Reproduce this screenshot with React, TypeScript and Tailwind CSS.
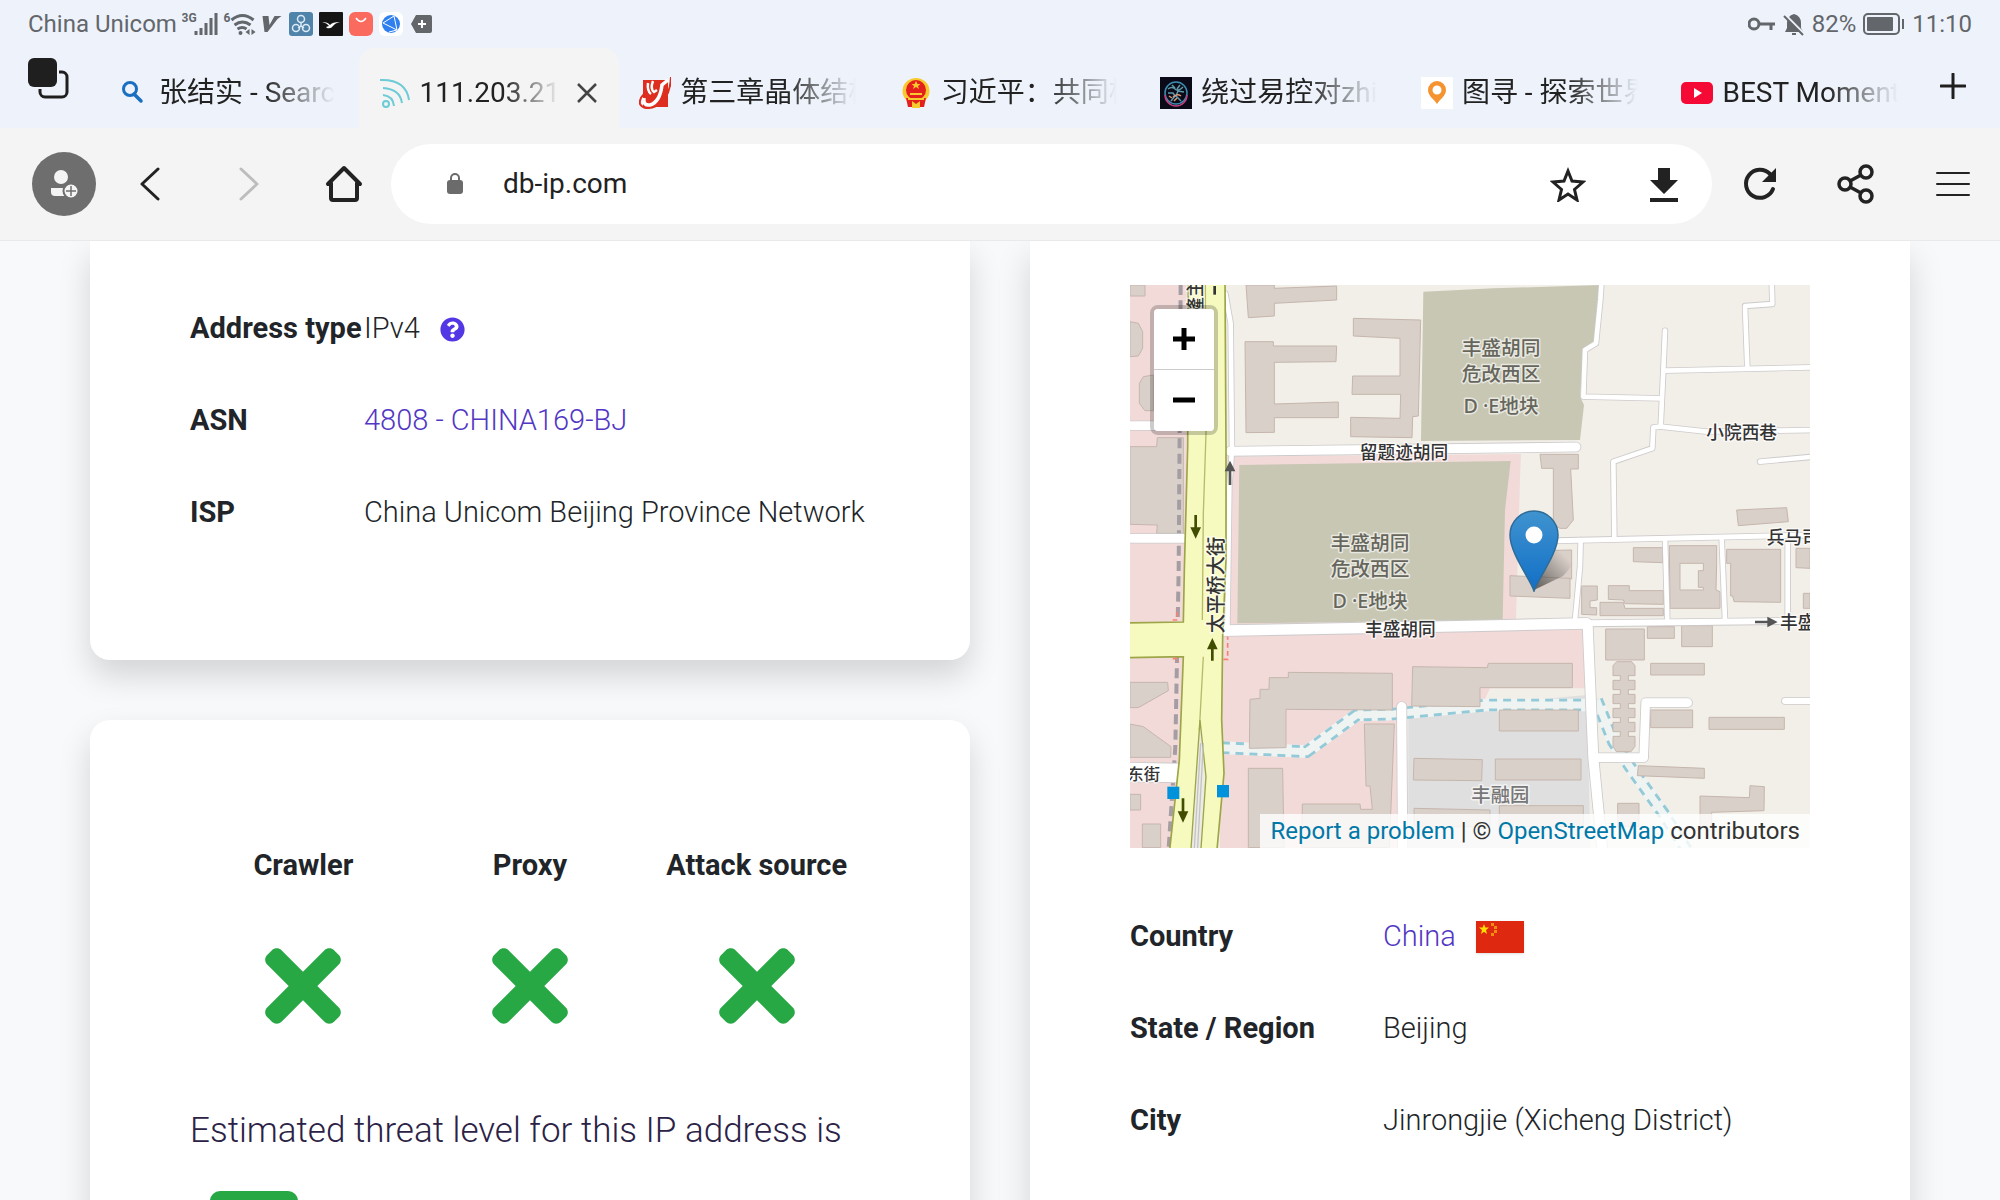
import React from 'react';
import { FaQuestionCircle, FaTimes } from 'react-icons/fa';

type Pts = string;

const buildings: Pts[] = [
  '30,15 75,15 75,48 30,48',
  '30,125 55,130 68,155 68,205 55,228 30,230',
  '100,285 70,290 58,310 58,370 75,392 100,392',
  '30,500 110,500 112,473 190,473 190,760 110,760 112,735 30,733',
  '378,15 463,15 463,25 650,18 650,60 463,70 463,108 385,113',
  '375,185 460,185 460,198 650,198 648,245 463,247 463,372 655,366 655,413 463,413 463,457 378,458',
  '700,115 902,120 895,408 878,410 876,473 692,470 692,412 840,415 842,343 696,343 698,288 840,288 840,175 700,168',
  '1260,523 1375,523 1375,567 1352,567 1360,720 1340,745 1320,745 1300,735 1300,565 1265,565',
  '1850,690 2000,683 2005,725 1855,737',
  '1540,803 1628,803 1628,848 1540,845',
  '1820,808 1982,808 1982,967 1842,965 1838,948 1832,948 1832,850 1820,850',
  '2028,805 2070,805 2070,865 2028,863',
  '2050,940 2070,940 2070,985 2050,985',
  '1250,812 1355,810 1355,897 1250,890',
  '1170,887 1350,895 1350,955 1170,948',
  '1385,918 1432,918 1432,960 1410,963 1410,983 1430,983 1430,1005 1385,1003',
  '1465,917 1528,917 1528,932 1630,932 1630,973 1515,971 1510,960 1465,958',
  '1440,967 1510,967 1515,985 1630,985 1630,1007 1440,1007',
  '1457,1047 1573,1047 1573,1140 1457,1140',
  '1582,1040 1663,1040 1663,1075 1582,1075',
  '1685,1037 1777,1037 1777,1100 1685,1100',
  '1592,1150 1753,1150 1753,1185 1592,1185',
  '1592,1290 1718,1290 1718,1343 1592,1343',
  '1767,1312 1993,1312 1993,1348 1767,1348',
  '1555,1457 1753,1465 1753,1495 1552,1487',
  '1740,1548 1888,1553 1890,1517 1933,1520 1932,1592 1775,1597 1775,1640 1740,1640',
  '1493,1570 1557,1570 1557,1640 1493,1640',
  '1138,1290 1375,1290 1375,1353 1138,1353',
  '1126,1437 1383,1437 1383,1500 1126,1500',
  '1138,1577 1390,1577 1390,1640 1138,1640',
  '882,1435 1087,1439 1085,1502 880,1500',
  '882,1585 1110,1590 1110,1640 882,1640',
  '878,1160 1102,1163 1105,1150 1357,1150 1357,1223 1080,1223 1080,1280 875,1278',
  '505,1177 817,1180 817,1290 498,1288 498,1403 388,1405 390,1258 420,1255 420,1228 447,1228 448,1193 505,1193',
  '385,1465 488,1465 492,1703 385,1703',
  '733,1332 823,1332 808,1703 545,1703 547,1572 720,1572 722,1588 757,1588 750,1518 738,1518',
  '30,1207 143,1207 145,1232 55,1283 30,1283',
  '30,1332 70,1340 153,1400 152,1432 30,1432',
  '30,1543 62,1543 62,1590 30,1590',
  '67,1632 122,1632 122,1703 67,1703',
];

const lanes: { pts: Pts; width: number }[] = [
  { pts: '1445,0 1441,60 1428,190 1395,210 1390,350 1620,355', width: 14 },
  { pts: '1635,152 1630,270 1622,440 1600,442 1597,505 1480,545 1483,770', width: 14 },
  { pts: '1635,272 2080,262', width: 14 },
  { pts: '1955,0 1957,72 1875,78 1882,262', width: 14 },
  { pts: '1622,440 1760,455 2080,450', width: 14 },
  { pts: '1920,545 2080,530', width: 14 },
  { pts: '1310,782 2080,765', width: 15 },
  { pts: '1382,780 1380,860 1365,1020', width: 14 },
  { pts: '1635,775 1642,1020', width: 14 },
  { pts: '1805,775 1815,1020', width: 14 },
  { pts: '2003,790 2003,1015', width: 14 },
  { pts: '316,40 332,130 336,512 328,620 322,1050', width: 14 },
  { pts: '1400,1030 2080,1022', width: 18 },
  { pts: '1995,1263 2080,1263', width: 18 },
  { pts: '330,514 1368,501', width: 27 },
  { pts: '310,1052 1050,1038 1400,1030', width: 32 },
  { pts: '1403,1035 1420,1433 1448,1720', width: 30 },
  { pts: '1430,1433 1571,1433 1577,1268 1703,1268', width: 26 },
  { pts: '845,1280 848,1720', width: 28 },
  { pts: '10,437 200,437', width: 26 },
  { pts: '10,775 196,775', width: 26 },
  { pts: '10,1476 180,1479', width: 56 },
];

const canals: Pts[] = [
  '305,1403 560,1415 710,1305 820,1302 870,1297 1100,1275 1400,1275',
  '1430,1260 1480,1385 1530,1460 1630,1600 1700,1710',
];

const MapLabel = ({ x, y, size = 53, color = '#333', anchor = 'middle', children }: {
  x: number; y: number; size?: number; color?: string; anchor?: 'middle' | 'start'; children: React.ReactNode;
}) => (
  <text x={x} y={y} fontSize={size} fontWeight="500" fill={color} textAnchor={anchor} stroke="#fff" strokeOpacity="0.6" strokeWidth="9" strokeLinejoin="round" paintOrder="stroke">
    {children}
  </text>
);

const StreetMap = () => (
  <svg viewBox="30 15 2040 1689" preserveAspectRatio="xMidYMid slice" className="block h-full w-full font-['Noto_Sans','Noto_Sans_CJK_SC',sans-serif]" role="img" aria-label="Map of Jinrongjie, Beijing">
    <rect x="30" y="15" width="2040" height="1689" fill="#f2efe9" />
    <g fill="#f2dad9">
      <rect x="30" y="15" width="170" height="1689" />
      <path d="M345 530 1203 522 1200 600 1188 1020 320 1040V530Z" />
      <path d="M300 1060 1400 1035V1225H1110L1080 1290H850V1704H300Z" />
    </g>
    <path d="M865 1295 1400 1245 1412 1704H865Z" fill="#dfdfdf" />
    <g fill="#c7c7b4">
      <path d="M910 35 1120 25 1440 15 1424 190 1392 205 1380 350 1392 375 1380 480 903 483Z" />
      <path d="M358 555 1172 543 1155 690 1148 1020 352 1030Z" />
    </g>
    {canals.map((pts) => (
      <g key={pts} fill="none">
        <polyline points={pts} stroke="#eff4f3" strokeWidth="38" />
        <polyline points={pts} stroke="#94cad8" strokeWidth="38" strokeDasharray="24 18" />
        <polyline points={pts} stroke="#eff4f3" strokeWidth="21" />
      </g>
    ))}
    <g fill="#d9d0c9" stroke="#c5b6ad" strokeWidth="3">
      {buildings.map((pts) => <polygon key={pts} points={pts} />)}
      <path fillRule="evenodd" d="M1648 797H1790V850L1788 930 1800 935V985H1650ZM1680 850V930H1750V922H1735V872H1750V850Z" />
      <path d="M1490 1145h45l10 12v30h-20v14h20v28h-20v14h20v28h-20v14h20v28h-20v14h20v28h-20v14h20v30l-12 16h-44l-10-16v-30h22v-14h-22v-28h22v-14h-22v-28h22v-14h-22v-28h22v-14h-22v-28h22v-14h-22v-30Z" />
    </g>
    <path d="M182 15 176 870 166 1400 146 1704" fill="none" stroke="#a49da3" strokeWidth="12" strokeDasharray="30 16" />
    <g fill="none" strokeLinecap="round" strokeLinejoin="round">
      {lanes.map((l) => <polyline key={l.pts} points={l.pts} stroke="#cdcacb" strokeWidth={l.width + 5} />)}
      {lanes.map((l) => <polyline key={l.pts} points={l.pts} stroke="#fff" strokeWidth={l.width} />)}
    </g>
    <path d="M205 0 203 500 193 870 190 1026 20 1029V1133L190 1130 178 1440 148 1720H290L312 1480 305 1320 308 1070 318 840 318 500 315 0Z" fill="#f7fabf" stroke="#9da548" strokeWidth="5" />
    <path d="M20 1032H300V1128H20Z" fill="#f7fabf" />
    <path d="M256 0 258 460 250 700 247 1020M250 1130 238 1350" fill="none" stroke="#b5bb6a" strokeWidth="4" />
    <path d="M240 1320 212 1720H242L258 1490Z" fill="#ecebe4" stroke="#9da548" strokeWidth="4" />
    <path d="M242 1390 222 1720M250 1390 232 1720" fill="none" stroke="#c4c4c6" strokeWidth="4" />
    <path d="M310 1138H323V1070M158 1020H172V985M158 1136H174V1146" fill="none" stroke="#fa8072" strokeWidth="5" strokeDasharray="14 10" />
    <g fill="#0092da">
      <rect x="142" y="1520" width="36" height="37" />
      <rect x="291" y="1515" width="36" height="37" />
    </g>
    <g fill="#555">
      <path d="M330 542 346 574H334V615H326V574H314Z" />
      <path d="M1973 1026 1942 1010V1022H1905V1030H1942V1042Z" />
    </g>
    <g fill="#414d00">
      <path d="M227 776 243 742H231V705H223V742H211Z" />
      <path d="M277 1074 293 1108H281V1142H273V1108H261Z" />
      <path d="M189 1628 205 1594H193V1555H185V1594H173Z" />
    </g>
    <MapLabel x={1143} y={226} size={59} color="#66665c">丰盛胡同</MapLabel>
    <MapLabel x={1143} y={304} size={59} color="#66665c">危改西区</MapLabel>
    <MapLabel x={1143} y={400} size={59} color="#66665c">D ·E地块</MapLabel>
    <MapLabel x={750} y={810} size={59} color="#66665c">丰盛胡同</MapLabel>
    <MapLabel x={750} y={888} size={59} color="#66665c">危改西区</MapLabel>
    <MapLabel x={750} y={984} size={59} color="#66665c">D ·E地块</MapLabel>
    <MapLabel x={1141} y={1566} size={58} color="#777">丰融园</MapLabel>
    <MapLabel x={852} y={538}>留题迹胡同</MapLabel>
    <MapLabel x={841} y={1068}>丰盛胡同</MapLabel>
    <MapLabel x={1865} y={478}>小院西巷</MapLabel>
    <MapLabel x={1940} y={793} anchor="start">兵马司</MapLabel>
    <MapLabel x={1980} y={1047} anchor="start">丰盛</MapLabel>
    <MapLabel x={22} y={1500} size={49} anchor="start">东街</MapLabel>
    <g transform="rotate(-90 308 1060)">
      <MapLabel x={308} y={1060} size={58} anchor="start">太平桥大街</MapLabel>
    </g>
    <g transform="rotate(-90 246 104)">
      <MapLabel x={246} y={104} anchor="start">隆主</MapLabel>
    </g>
    <path d="M280 18h8v26h-8z" fill="#333" />
  </svg>
);

const Marker = () => (
  <svg viewBox="0 0 82 82" className="h-full w-full" aria-hidden="true">
    <defs>
      <linearGradient id="pin" x1="0" y1="0" x2="0" y2="1">
        <stop offset="0" stopColor="#3f93cf" />
        <stop offset="1" stopColor="#126fc6" />
      </linearGradient>
      <linearGradient id="shade" x1="0" y1="1" x2="1" y2="0">
        <stop offset="0.1" stopColor="#000" stopOpacity="0.5" />
        <stop offset="0.8" stopColor="#000" stopOpacity="0" />
      </linearGradient>
    </defs>
    <path d="M25 80 38 44Q50 34 64 42 68 52 54 66Z" fill="url(#shade)" />
    <path d="M25 81C22 70 1 44 1 25a24 24 0 0 1 48 0C49 44 28 70 25 81Z" fill="url(#pin)" stroke="#2e6c97" strokeWidth="1.5" />
    <circle cx="25" cy="25" r="8.5" fill="#fff" />
  </svg>
);

const tabs: { title: string; icon: React.ReactNode; active?: boolean }[] = [
  {
    title: '张结实 - Search',
    icon: <g fill="none" stroke="#1a6fc0"><circle cx="12" cy="12" r="6.500" strokeWidth="3" /><path d="m16 17 7 7" strokeWidth="3.500" strokeLinecap="round" /></g>,
  },
  {
    title: '111.203.21',
    active: true,
    icon: <g fill="none" stroke="#6ccbd6" strokeWidth="2"><circle cx="7" cy="27" r="3" /><path d="M4 18q10 1 11 11M4 11q17 1 19 15M1 3q26-1 29 20" /></g>,
  },
  {
    title: '第三章晶体结构',
    icon: <g><path d="M4 3H29V30H4Z" fill="#dd2e1f" /><path d="M32 0Q31 22 17 29 5 34 1 27 0 22 5 17" fill="none" stroke="#dd2e1f" strokeWidth="2" /><path d="M29 3 23 8Q21 25 11 28 4 29 5 21" fill="none" stroke="#fff" strokeWidth="3.500" /><path d="M9 6Q8 14 12 17M14 4Q11 12 15 15L18 13" fill="none" stroke="#fff" strokeWidth="2.500" /></g>,
  },
  {
    title: '习近平：共同构',
    icon: <g><ellipse cx="16" cy="14" rx="13.500" ry="13" fill="#f9c930" /><ellipse cx="16" cy="13" rx="10" ry="10" fill="#e3201b" /><path d="M6 21H26L24 30H8Z" fill="#e3201b" /><path d="m16 4 1.500 3h3l-2.500 2 1 3-3-2-3 2 1-3-2.500-2h3ZM10 16h12v2H10ZM8 21h16v2H8ZM12 24l4 3 4-3v7h-8Z" fill="#f9c930" /></g>,
  },
  {
    title: '绕过易控对zhihui',
    icon: <g fill="none"><path d="M0 0H32V32H0Z" fill="#0b0a18" /><circle cx="16" cy="16" r="11" stroke="#3a8fb0" strokeWidth="1.500" /><path d="M5 18a11 11 0 0 0 22 0" stroke="#c2407f" strokeWidth="1.500" /><path d="M8 12q4-3 7 0t8-2M8 16h5l2 3-4 5M24 15l-6-1-2 5 5 5M12 8l3 3M20 8l-3 4" stroke="#5e9aa8" strokeWidth="1.500" /><path d="M13 20q4-4 8-1M14 24l3-3M9 19l3 2" stroke="#d99a7c" strokeWidth="1.500" /></g>,
  },
  {
    title: '图寻 - 探索世界',
    icon: <g><path d="M0 0H32V32H0Z" fill="#fff" /><path fillRule="evenodd" d="M16 4a9 9 0 0 1 9 9c0 6-6 9-9 14-3-5-9-8-9-14a9 9 0 0 1 9-9Zm0 4.500a4.500 4.500 0 1 0 0 9 4.500 4.500 0 0 0 0-9Z" fill="#f59331" /></g>,
  },
  {
    title: 'BEST Moments',
    icon: <g><rect y="5" width="32" height="22" rx="5" fill="#f50935" /><path d="m13 11 8 5-8 5Z" fill="#fff" /></g>,
  },
];

const StatusBar = () => (
  <div className="flex h-12 items-center justify-between px-7 text-2xl text-[#63666b]">
    <div className="flex items-center">
      <span className="w-[154px] whitespace-nowrap">China Unicom</span>
      <svg viewBox="182 8 106 32" className="h-8 w-[107px]" fill="#63666b" aria-hidden="true">
        <text x="181" y="22" fontSize="12" fontWeight="700">3G</text>
        <path d="M194 31h3v4h-3zM199 28h3v7h-3zM204 23h3v12h-3zM209 18h3v17h-3zM214 13h3v22h-3z" />
        <text x="223" y="22" fontSize="12" fontWeight="700">6</text>
        <path d="M231 20q11-9 22 0M234 25q8-6 16 0M237 29q5-3 9 0" fill="none" stroke="#63666b" strokeWidth="3" />
        <circle cx="240" cy="33" r="2" />
        <path d="m249 29-4 3 4 3zM251 29l4 3-4 3z" />
        <path d="M262 16h6l1 9 5-9h7l-4 3-10 13h-3z" />
      </svg>
      <div className="flex items-center gap-[6px]">
        <svg viewBox="0 0 24 24" className="size-6" fill="none" aria-hidden="true">
          <rect width="24" height="24" rx="3" fill="#4f83aa" />
          <g stroke="#dcebf5" strokeWidth="1.500"><circle cx="12" cy="7" r="3.500" /><circle cx="7" cy="16" r="3.500" /><circle cx="17" cy="16" r="3.500" /><path d="M12 10v4l-3 2M12 14l3 2" /></g>
        </svg>
        <svg viewBox="0 0 24 24" className="size-6" aria-hidden="true">
          <rect width="24" height="24" rx="1" fill="#151515" />
          <path d="M3 10q6 0 8 3 2-3 10-3-5 1-7 4-2 3-6 2l-1-1 3-1q-2-3-7-4Z" fill="#fff" />
        </svg>
        <svg viewBox="0 0 24 24" className="size-6" aria-hidden="true">
          <rect width="24" height="24" rx="6" fill="#fb6a5e" />
          <path d="M7 6q5 7 10 0" fill="none" stroke="#fff" strokeWidth="1.500" />
        </svg>
        <svg viewBox="0 0 24 24" className="size-6" aria-hidden="true">
          <rect width="24" height="24" rx="6" fill="#fff" />
          <circle cx="12" cy="12" r="9" fill="#2f7ff0" />
          <path d="m4 11 11-7 3 14L4 11m14 7-8 2" fill="none" stroke="#fff" strokeWidth="1" />
        </svg>
        <svg viewBox="0 0 24 24" className="size-6" aria-hidden="true">
          <path d="M7 3h14a2 2 0 0 1 2 2v14a2 2 0 0 1-2 2H7l-5-9Z" fill="#63666b" />
          <path d="M13 8v8M9 12h8" stroke="#fff" strokeWidth="2" />
        </svg>
      </div>
    </div>
    <div className="flex items-center gap-[6px]">
      <svg viewBox="0 0 28 24" className="h-6 w-7" fill="none" stroke="#63666b" strokeWidth="3" aria-hidden="true">
        <circle cx="6" cy="12" r="5" /><path d="M11 12h16M23 12v6" />
      </svg>
      <svg viewBox="0 0 24 24" className="size-6" aria-hidden="true">
        <path d="M12 2q7 2 7 9v5l2 4H3l2-4v-5q0-7 7-9Z" fill="#63666b" />
        <path d="m3 3 20 20" stroke="#eef3fb" strokeWidth="3" />
        <path d="m2 4 19 19M10 22h4" stroke="#63666b" strokeWidth="2" />
      </svg>
      <span>82%</span>
      <svg viewBox="0 0 44 24" className="h-6 w-11" aria-hidden="true">
        <rect x="2" y="2" width="35" height="20" rx="4" fill="none" stroke="#63666b" strokeWidth="2" />
        <rect x="5" y="5" width="26" height="14" rx="1" fill="#63666b" />
        <path d="M41 7v10" stroke="#63666b" strokeWidth="2" />
      </svg>
      <span>11:10</span>
    </div>
  </div>
);

const TabStrip = () => (
  <nav className="flex h-20 text-[28px] text-[#222]" aria-label="Tabs">
    <button className="flex w-[98px] shrink-0 justify-start pt-2 pl-6" aria-label="All tabs">
      <svg viewBox="0 0 48 48" className="size-12" fill="none" aria-hidden="true">
        <path d="M35 16h3a5 5 0 0 1 5 5v15a5 5 0 0 1-5 5H21a5 5 0 0 1-5-5v-3" stroke="#1f1f1f" strokeWidth="3" />
        <rect x="4" y="2" width="29" height="29" rx="6" fill="#1f1f1f" />
      </svg>
    </button>
    {tabs.map((tab) => (
      <div key={tab.title} className={tab.active ? 'flex h-20 min-w-0 flex-1 items-center gap-[9px] rounded-t-2xl bg-[#f4f4f4] pt-[10px] pl-5' : 'flex h-20 min-w-0 flex-1 items-center gap-[9px] pt-[10px] pl-5'}>
        <button className="flex min-w-0 items-center gap-[9px]">
          <svg viewBox="0 0 32 32" className="size-8 shrink-0" aria-hidden="true">{tab.icon}</svg>
          <span className={tab.active ? 'w-[140px] overflow-hidden whitespace-nowrap text-left mask-r-from-60%' : 'w-[176px] overflow-hidden whitespace-nowrap text-left mask-r-from-60%'}>
            {tab.title}
          </span>
        </button>
        {tab.active && (
          <button className="p-2" aria-label="Close tab">
            <svg viewBox="0 0 20 20" className="size-5" aria-hidden="true"><path d="m1 1 18 18M19 1 1 19" stroke="#444" strokeWidth="2.500" /></svg>
          </button>
        )}
      </div>
    ))}
    <button className="w-[78px] shrink-0 pb-1 pl-[18px]" aria-label="New tab">
      <svg viewBox="0 0 26 26" className="size-[26px]" aria-hidden="true"><path d="M13 1v24M1 13h24" stroke="#1f1f1f" strokeWidth="3" strokeLinecap="round" /></svg>
    </button>
  </nav>
);

const Toolbar = () => (
  <div className="flex h-[113px] shrink-0 items-center border-b border-[#e9e9e9] bg-[#f4f4f4] pl-8">
    <button className="flex size-16 items-center justify-center rounded-full bg-[#6e6e6e]" aria-label="Profile">
      <svg viewBox="0 0 32 32" className="size-8" aria-hidden="true">
        <circle cx="13" cy="9" r="7" fill="#f4f4f4" />
        <path d="M3 20h20v8H7q-4 0-4-4Z" fill="#f4f4f4" />
        <circle cx="23" cy="23" r="7.500" fill="#f4f4f4" stroke="#6e6e6e" strokeWidth="2" />
        <path d="M23 18v10M18 23h10" stroke="#6e6e6e" strokeWidth="1.500" />
      </svg>
    </button>
    <button className="ml-[34px] p-2" aria-label="Back">
      <svg viewBox="0 0 24 34" className="h-[34px] w-6" aria-hidden="true"><path d="M20 2 4 17l16 15" fill="none" stroke="#222" strokeWidth="3" strokeLinecap="round" strokeLinejoin="round" /></svg>
    </button>
    <button className="ml-[60px] p-2" aria-label="Forward" disabled>
      <svg viewBox="0 0 24 34" className="h-[34px] w-6" aria-hidden="true"><path d="m3 2 16 15L3 32" fill="none" stroke="#bdbdbd" strokeWidth="3" strokeLinecap="round" strokeLinejoin="round" /></svg>
    </button>
    <button className="ml-[47px] p-2" aria-label="Home">
      <svg viewBox="0 0 38 38" className="size-[38px]" fill="none" stroke="#222" strokeWidth="4" strokeLinecap="round" strokeLinejoin="round" aria-hidden="true">
        <path d="M3 19 19 3l16 16M6 18v15q0 2 2 2h22q2 0 2-2V18" />
      </svg>
    </button>
    <div className="ml-5 flex h-20 flex-1 items-center rounded-full bg-white pl-14">
      <svg viewBox="0 0 16 22" className="h-[22px] w-4" aria-hidden="true">
        <rect y="7" width="16" height="14" rx="3" fill="#6b6b6b" />
        <path d="M4 8V5a4 4 0 0 1 8 0v3" fill="none" stroke="#6b6b6b" strokeWidth="2" />
      </svg>
      <input aria-label="Address" defaultValue="db-ip.com" className="ml-10 min-w-0 flex-1 bg-transparent text-[28px] text-[#222] outline-none" />
      <button className="p-2" aria-label="Bookmark">
        <svg viewBox="0 0 36 36" className="size-9" aria-hidden="true"><path d="m18 5 4 10 11 1-8.500 7.500L27 34l-9-6-9 6 2.500-10.500L3 16l11-1Z" fill="none" stroke="#222" strokeWidth="3" /></svg>
      </button>
      <button className="ml-11 p-2" aria-label="Download">
        <svg viewBox="0 0 36 36" className="size-9" fill="#222" aria-hidden="true"><path d="M12 2h12v12h8L18 28 4 14h8ZM4 32h28v4H4z" /></svg>
      </button>
      <span className="w-[22px]" />
    </div>
    <button className="ml-[20px] p-2" aria-label="Reload">
      <svg viewBox="0 0 40 40" className="size-10" aria-hidden="true"><path d="M33 25a14 14 0 1 1-3-15" fill="none" stroke="#222" strokeWidth="4" strokeLinecap="round" /><path d="M36 4v14H22Z" fill="#222" /></svg>
    </button>
    <button className="ml-10 p-2" aria-label="Share">
      <svg viewBox="0 0 40 40" className="size-10" fill="none" stroke="#222" strokeWidth="3.500" aria-hidden="true">
        <circle cx="9" cy="20" r="6" /><circle cx="30" cy="8" r="6" /><circle cx="30" cy="32" r="6" /><path d="m14 17 11-6M14 23l11 6" />
      </svg>
    </button>
    <button className="mr-[22px] ml-[44px] p-2" aria-label="Menu">
      <svg viewBox="0 0 34 34" className="size-[34px]" aria-hidden="true"><path d="M1 6h32M1 17h32M1 28h32" stroke="#222" strokeWidth="2" strokeLinecap="round" /></svg>
    </button>
  </div>
);

const Row = ({ label, children }: { label: string; children: React.ReactNode }) => (
  <tr className="h-[92px]">
    <th scope="row" className="text-left font-bold whitespace-nowrap">{label}</th>
    <td className="font-light">{children}</td>
  </tr>
);

const Flag = () => (
  <svg viewBox="0 0 48 32" className="ml-5 inline-block h-8 w-12 shadow" role="img" aria-label="China flag">
    <path d="M0 0h48v32H0z" fill="#de2910" />
    <path d="m8 3 1.300 3.500H13l-3 2.500 1 4-3-2.300L5 13l1-4-3-2.500h3.700Z" fill="#ffde00" />
    <path d="M15 2h3v3h-3zM18 5h3v3h-3zM18 9h3v3h-3zM15 12h3v3h-3z" fill="#f08c10" />
  </svg>
);

const threats = ['Crawler', 'Proxy', 'Attack source'];

export default function App() {
  return (
    <div className="flex h-screen flex-col overflow-hidden bg-[#f8f9fb] font-[Roboto,'Noto_Sans_CJK_SC',sans-serif] text-[#212529]">
      <header className="shrink-0 bg-[#eef3fb]">
        <StatusBar />
        <TabStrip />
      </header>
      <Toolbar />
      <main className="grid min-h-0 flex-1 grid-cols-2 gap-[60px] overflow-hidden px-[90px] text-[29px]">
        <div className="flex flex-col gap-[60px]">
          <section className="rounded-b-[20px] bg-white px-[100px] pt-[42px] pb-[101px] shadow-[0_16px_32px_rgba(0,0,0,0.15)]">
            <table className="w-full">
              <colgroup>
                <col className="w-[174px]" />
                <col />
              </colgroup>
              <tbody>
                <Row label="Address type">
                  <span className="flex items-center">
                    IPv4
                    <button className="ml-5 text-[25px] text-[#5237e4]" aria-label="About IPv4"><FaQuestionCircle /></button>
                  </span>
                </Row>
                <Row label="ASN"><a href="#asn" className="text-[#5237c4]">4808 - CHINA169-BJ</a></Row>
                <Row label="ISP">China Unicom Beijing Province Network</Row>
              </tbody>
            </table>
          </section>
          <section className="shrink-0 rounded-[20px] bg-white px-[100px] pt-[100px] pb-[100px] shadow-[0_16px_32px_rgba(0,0,0,0.15)]">
            <table className="w-full table-fixed text-center">
              <thead>
                <tr className="h-[91px]">
                  {threats.map((name) => <th key={name} className="font-bold whitespace-nowrap">{name}</th>)}
                </tr>
              </thead>
              <tbody>
                <tr className="h-[150px]">
                  {threats.map((name) => (
                    <td key={name}><FaTimes className="mx-auto text-[110px] text-[#28a745]" aria-label="No" /></td>
                  ))}
                </tr>
              </tbody>
            </table>
            <p className="mt-[36px] text-[35px] leading-[68px] font-light text-[#2b2246]">Estimated threat level for this IP address is</p>
            <span className="mt-[26px] ml-5 block w-[88px] rounded-[10px] bg-[#28a745] px-4 py-2 text-2xl font-bold text-white">low</span>
          </section>
        </div>
        <section className="bg-white px-[100px] pt-11 shadow-[0_16px_32px_rgba(0,0,0,0.15)]">
          <div className="relative h-[563px] overflow-hidden">
            <StreetMap />
            <div className="absolute top-5 left-5 overflow-hidden rounded-lg border-4 border-black/20 bg-clip-padding">
              <button className="flex h-[61px] w-[60px] items-center justify-center border-b border-[#ccc] bg-white" aria-label="Zoom in">
                <svg viewBox="0 0 22 22" className="size-[22px]" aria-hidden="true"><path d="M11 0v22M0 11h22" stroke="#000" strokeWidth="5" /></svg>
              </button>
              <button className="flex h-[61px] w-[60px] items-center justify-center bg-white" aria-label="Zoom out">
                <svg viewBox="0 0 22 22" className="size-[22px]" aria-hidden="true"><path d="M0 10h22" stroke="#000" strokeWidth="5" /></svg>
              </button>
            </div>
            <div className="absolute top-[225px] left-[379px] size-[82px]"><Marker /></div>
            <div className="absolute right-0 bottom-0 bg-white/80 px-[10px] text-2xl leading-[34px] whitespace-nowrap text-[#333]">
              <a href="#report" className="text-[#0078a8]">Report a problem</a> | © <a href="#osm" className="text-[#0078a8]">OpenStreetMap</a> contributors
            </div>
          </div>
          <table className="mt-[43px] w-full">
            <colgroup>
              <col className="w-[253px]" />
              <col />
            </colgroup>
            <tbody>
              <Row label="Country">
                <span className="flex items-center"><a href="#china" className="text-[#5237c4]">China</a><Flag /></span>
              </Row>
              <Row label="State / Region">Beijing</Row>
              <Row label="City">Jinrongjie (Xicheng District)</Row>
            </tbody>
          </table>
        </section>
      </main>
    </div>
  );
}
